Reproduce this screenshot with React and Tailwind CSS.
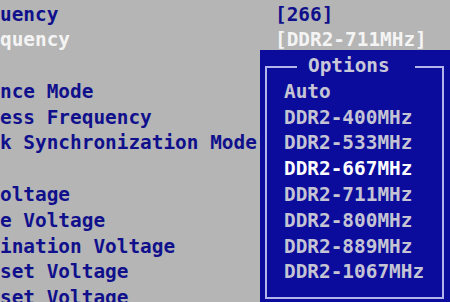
const rows = [
  { label: 'uency', value: '[266]' },
  { label: 'quency', value: '[DDR2-711MHz]', active: true },
  { label: '' },
  { label: 'nce Mode' },
  { label: 'ess Frequency' },
  { label: 'k Synchronization Mode' },
  { label: '' },
  { label: 'oltage' },
  { label: 'e Voltage' },
  { label: 'ination Voltage' },
  { label: 'set Voltage' },
  { label: 'set Voltage' },
];

const options = [
  'Auto',
  'DDR2-400MHz',
  'DDR2-533MHz',
  'DDR2-667MHz',
  'DDR2-711MHz',
  'DDR2-800MHz',
  'DDR2-889MHz',
  'DDR2-1067MHz',
];

const font = { fontFamily: '"DejaVu Sans Mono", "Liberation Mono", monospace' };

function OptionsPopup() {
  return (
    <div className="absolute left-[260px] top-[50px] w-[190px] h-[252px] bg-[#0c0c9c]">
      {/* inner frame */}
      <div className="absolute left-[5px] top-[16px] right-[6px] bottom-[3px] border-2 border-[#b4b4ec]" />
      <div className="relative pt-[3.1px] text-[19.4px] leading-[25.8px] font-bold">
        <div className="h-[25.8px] flex">
          <span className="ml-[37px] pl-[11px] pr-[25px] bg-[#0c0c9c] text-[#c8c8d8]">Options</span>
        </div>
        {options.map((opt) => (
          <div
            key={opt}
            className={`h-[25.8px] pl-[24px] whitespace-pre ${
              opt === 'DDR2-667MHz' ? 'text-white' : 'text-[#c4c4d4]'
            }`}
          >
            {opt}
          </div>
        ))}
      </div>
    </div>
  );
}

export default function App() {
  return (
    <div className="relative w-[450px] h-[302px] overflow-hidden bg-[#b5b5b5]" style={font}>
      <div className="pt-[1.5px] text-[19.4px] leading-[25.8px] font-bold">
        {rows.map((row, i) => (
          <div key={i} className="h-[25.8px] grid grid-cols-[275px_1fr] whitespace-pre">
            <span className={row.active ? 'text-[#f4f4f4]' : 'text-[#10108c]'}>{row.label}</span>
            <span className={row.active ? 'text-[#f4f4f4]' : 'text-[#10108c]'}>{row.value || ''}</span>
          </div>
        ))}
      </div>
      <OptionsPopup />
    </div>
  );
}
